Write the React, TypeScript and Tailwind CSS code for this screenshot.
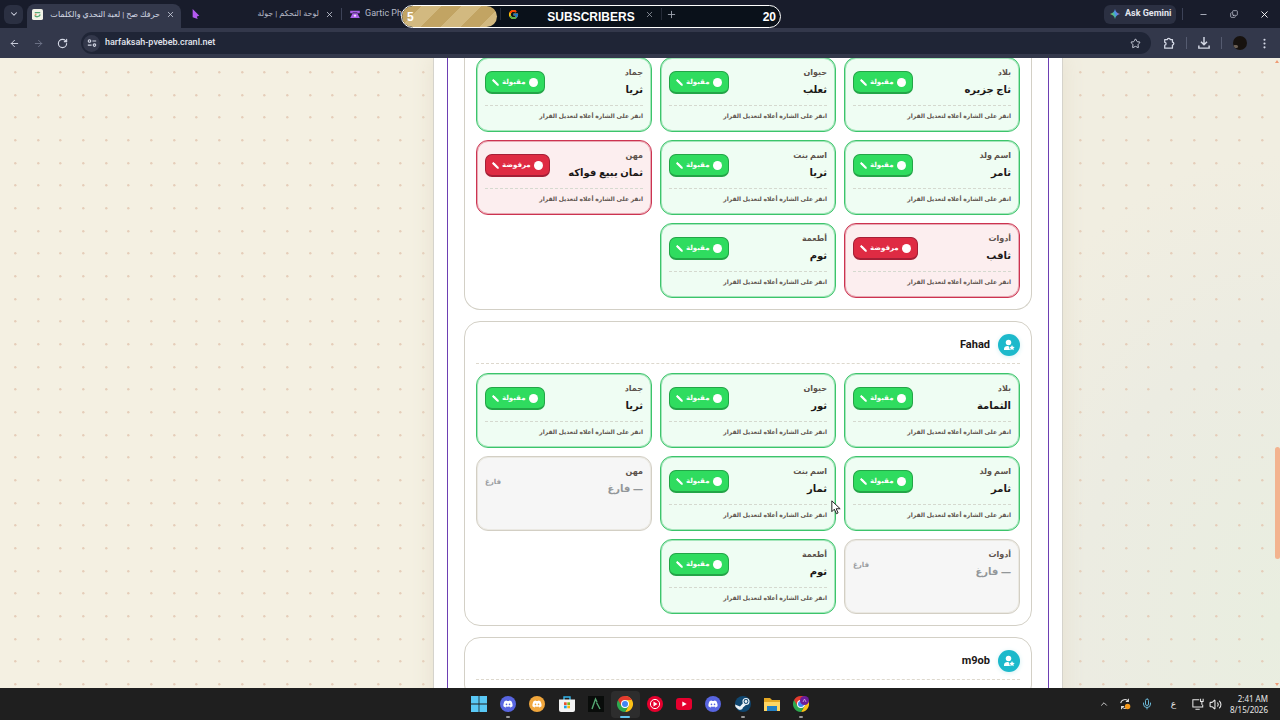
import type { ReactNode } from "react";
import {
  ArrowLeft,
  ArrowRight,
  ChevronDown,
  ChevronUp,
  Copy,
  EllipsisVertical,
  Mic,
  Minus,
  Pencil,
  Plus,
  RotateCw,
  Star,
  Volume2,
  X,
} from "lucide-react";
import { FaDiscord, FaSteam } from "react-icons/fa";
import { FcGoogle } from "react-icons/fc";

type Status = "accepted" | "rejected" | "empty";
type Answer = { category: string; text: string; status: Status };
type Player = { name: string; answers: Answer[]; headless?: boolean };

const players: Player[] = [
  {
    name: "",
    headless: true,
    answers: [
      { category: "بلاد", text: "ثاج جزيره", status: "accepted" },
      { category: "حيوان", text: "ثعلب", status: "accepted" },
      { category: "جماد", text: "ثريا", status: "accepted" },
      { category: "اسم ولد", text: "ثامر", status: "accepted" },
      { category: "اسم بنت", text: "ثريا", status: "accepted" },
      { category: "مهن", text: "ثمان يبيع فواكه", status: "rejected" },
      { category: "أدوات", text: "ثاقب", status: "rejected" },
      { category: "أطعمة", text: "ثوم", status: "accepted" },
    ],
  },
  {
    name: "Fahad",
    answers: [
      { category: "بلاد", text: "الثمامة", status: "accepted" },
      { category: "حيوان", text: "ثور", status: "accepted" },
      { category: "جماد", text: "ثريا", status: "accepted" },
      { category: "اسم ولد", text: "ثامر", status: "accepted" },
      { category: "اسم بنت", text: "ثمار", status: "accepted" },
      { category: "مهن", text: "— فارغ", status: "empty" },
      { category: "أدوات", text: "— فارغ", status: "empty" },
      { category: "أطعمة", text: "ثوم", status: "accepted" },
    ],
  },
  { name: "m9ob", answers: [] },
];

const cardStyles: Record<Status, string> = {
  accepted: "border-[#3cc46b] bg-[#effdf3] shadow-[inset_0_0_0_1px_#a5e6bb]",
  rejected: "border-[#cc3350] bg-[#fceeef] shadow-[inset_0_0_0_1px_#e9a9b4]",
  empty: "border-[#d3cfc4] bg-[#f6f6f6] shadow-[inset_0_0_0_1px_#ebe9e3]",
};

function AnswerCard({ answer }: { answer: Answer }) {
  const { category, text, status } = answer;
  const empty = status === "empty";
  return (
    <article className={`min-h-[75px] rounded-xl border p-2 ${cardStyles[status]}`}>
      <div className="flex items-center justify-between">
        <div>
          <h3 className="pb-[2px] text-[8px] leading-[11px] font-bold text-[#5c524c]">{category}</h3>
          <p className={`text-[10px] leading-5 font-bold ${empty ? "text-[#929699]" : "text-[#1b1716]"}`}>{text}</p>
        </div>
        {empty ? (
          <span className="text-[7px] leading-3 font-bold text-[#9a9da1]">فارغ</span>
        ) : (
          <button
            type="button"
            className={`flex h-[23px] items-center gap-[3px] rounded-[7px] border border-b-2 px-[6px] text-[7px] font-bold text-white ${
              status === "accepted" ? "border-[#23a547] bg-[#2fdc5f]" : "border-[#a51f36] bg-[#df2b43]"
            }`}
          >
            <span className="size-[9px] rounded-full bg-white" />
            {status === "accepted" ? "مقبولة" : "مرفوضة"}
            <Pencil className="size-[7px] -scale-x-100" fill="currentColor" strokeWidth={3} />
          </button>
        )}
      </div>
      {!empty && (
        <p className="mt-[6px] border-t border-dashed border-[#d5d9cf] pt-[3px] text-[6px] leading-[14px] font-bold text-[#5f554f]">
          انقر على الشارة أعلاه لتعديل القرار
        </p>
      )}
    </article>
  );
}

function PlayerAvatar() {
  return (
    <span className="flex size-[22px] items-center justify-center rounded-full bg-[#1cb9cb] shadow-[0_1px_5px_#d5f0f3]">
      <svg viewBox="0 0 24 24" className="size-3" fill="#fff" aria-hidden="true">
        <circle cx="11" cy="7" r="5.500" />
        <path d="M2 22v-2c0-4 3-6 7-6h2l3 8z" />
        <path d="m18 12 1.700 3.400 3.800.6-2.700 2.700.6 3.800-3.400-1.800-3.400 1.800.6-3.800-2.700-2.700 3.800-.6z" />
      </svg>
    </span>
  );
}

function PlayerPanel({ player }: { player: Player }) {
  return (
    <section
      className={`border-[#d3d0c6] bg-white px-[11px] pb-[11px] ${
        player.headless ? "rounded-b-2xl border border-t-0" : "rounded-2xl border pt-3"
      }`}
    >
      {!player.headless && (
        <header className="mb-[9px] flex items-center gap-2 border-b border-dashed border-[#ddd8cd] pb-[7px]">
          <PlayerAvatar />
          <h2 className="font-[Roboto,sans-serif] text-[11px] leading-5 font-bold text-[#1b1716]">{player.name}</h2>
        </header>
      )}
      <div className={`grid grid-cols-3 gap-2 ${player.headless ? "-mt-px" : ""}`}>
        {player.answers.map((a) => (
          <AnswerCard key={a.category} answer={a} />
        ))}
      </div>
    </section>
  );
}

function DotBackdrop() {
  const stops = [15, 38, 60];
  return (
    <svg className="absolute inset-0 size-full" aria-hidden="true">
      <defs>
        <pattern id="dots" width="68" height="68" patternUnits="userSpaceOnUse">
          {stops.map((x) => stops.map((y) => <circle key={`${x}-${y}`} cx={x + 0.3} cy={y - 0.7} r="1.200" fill="#e5cdb9" />))}
        </pattern>
        <radialGradient id="glow" cx="1" cy="0.9" r="0.75">
          <stop offset="0" stopColor="#e9eee0" />
          <stop offset="0.6" stopColor="#ecece2" />
          <stop offset="1" stopColor="#f1eee1" />
        </radialGradient>
      </defs>
      <rect x="65%" width="35%" height="100%" fill="url(#glow)" />
      <rect width="100%" height="100%" fill="url(#dots)" />
    </svg>
  );
}

function ChromeLogo({ badge = false }: { badge?: boolean }) {
  return (
    <svg viewBox="0 0 32 32" className="size-4" aria-hidden="true">
      <path d="M16 0a16 16 0 0 1 13.860 8A16 16 0 0 1 16 32l7-12z" fill="#fbc116" />
      <path d="M2.140 8A16 16 0 0 0 16 32l7-12-7-4z" fill="#2da94f" />
      <path d="M2.140 8A16 16 0 0 1 29.860 8H16l-7 12z" fill="#e33b2e" />
      <circle cx="16" cy="16" r="8" fill="#fff" />
      <circle cx="16" cy="16" r="6" fill="#4285f4" />
      {badge && <circle cx="23" cy="9" r="9" fill="#6a1b9a" />}
      {badge && <path d="m20 12 3-6 3 6" stroke="#d9b6ee" strokeWidth="1.500" fill="none" />}
    </svg>
  );
}

function Disc({ className, children }: { className: string; children: ReactNode }) {
  return <span className={`flex size-4 items-center justify-center ${className}`}>{children}</span>;
}

const apps: { label: string; icon: ReactNode; running?: boolean; active?: boolean }[] = [
  {
    label: "Start",
    icon: (
      <svg viewBox="0 0 16 16" className="size-4" fill="#59c8f5" aria-hidden="true">
        <path d="M0 0h7.600v7.600H0zM8.400 0H16v7.600H8.400zM0 8.400h7.600V16H0zM8.400 8.400H16V16H8.400z" />
      </svg>
    ),
  },
  { label: "Discord", running: true, icon: <Disc className="rounded-full bg-[#5865e0]"><FaDiscord size={10} color="#fff" /></Disc> },
  { label: "Discord Canary", icon: <Disc className="rounded-full bg-[#f0a63c]"><FaDiscord size={10} color="#fff" /></Disc> },
  {
    label: "Microsoft Store",
    icon: (
      <svg viewBox="0 0 16 16" className="size-4" aria-hidden="true">
        <path d="M5 4V1h6v3" fill="none" stroke="#35b5ea" strokeWidth="1.400" />
        <path d="M0 3.500h16V14a2 2 0 0 1-2 2H2a2 2 0 0 1-2-2z" fill="#f3f3f3" />
        <path d="M5 6.300h2.700V9H5z" fill="#e8502c" />
        <path d="M8.300 6.300H11V9H8.300z" fill="#7cb518" />
        <path d="M5 9.600h2.700v2.700H5z" fill="#1ba1e2" />
        <path d="M8.300 9.600H11v2.700H8.300z" fill="#f9b70d" />
      </svg>
    ),
  },
  {
    label: "Games",
    icon: (
      <svg viewBox="0 0 16 16" className="size-4" aria-hidden="true">
        <path d="M0 0h16v16H0z" fill="#090c0a" />
        <path d="m4 13 3.500-10 1.500 3M8.500 6.500 12 13" fill="none" stroke="#55a873" strokeWidth="1.400" />
      </svg>
    ),
  },
  { label: "Chrome", active: true, icon: <ChromeLogo /> },
  {
    label: "YouTube Music",
    icon: (
      <svg viewBox="0 0 16 16" className="size-4" aria-hidden="true">
        <circle cx="8" cy="8" r="8" fill="#e6002e" />
        <circle cx="8" cy="8" r="4.600" fill="none" stroke="#fff" />
        <path d="m6.500 5.500 4 2.500-4 2.500z" fill="#fff" />
      </svg>
    ),
  },
  {
    label: "YouTube",
    icon: (
      <svg viewBox="0 0 16 16" className="size-4" aria-hidden="true">
        <rect y="2" width="16" height="12" rx="3" fill="#e6002e" />
        <path d="m6.300 5.500 4.400 2.500-4.400 2.500z" fill="#fff" />
      </svg>
    ),
  },
  { label: "Discord PTB", icon: <Disc className="rounded-full bg-[#5865e0]"><FaDiscord size={10} color="#fff" /></Disc> },
  {
    label: "Steam",
    running: true,
    icon: (
      <svg viewBox="0 0 16 16" className="size-4" aria-hidden="true">
        <circle cx="8" cy="8" r="8" fill="#10466f" />
        <path d="M0 8.500 5 10.500 9 6l3 2-4 3.500a3 3 0 0 1-5 1.500L.6 11z" fill="#eef3f7" />
        <circle cx="11" cy="5.500" r="3" fill="#10466f" stroke="#eef3f7" strokeWidth="1.100" />
        <circle cx="11" cy="5.500" r="1.400" fill="#eef3f7" />
      </svg>
    ),
  },
  {
    label: "Files",
    icon: (
      <svg viewBox="0 0 18 16" className="h-4 w-[18px]" aria-hidden="true">
        <path d="M1 2h6l2 2h8v10H1z" fill="#e5a823" />
        <path d="M1 6h16v9H1z" fill="#ffd663" />
        <path d="M4 10h10v5H4z" fill="#2480c4" />
      </svg>
    ),
  },
  { label: "Chrome profile", running: true, icon: <ChromeLogo badge /> },
];

function BrowserChrome() {
  return (
    <header className="shrink-0 bg-[#181c2b] font-[Roboto,'Noto_Sans','DejaVu_Sans',sans-serif] text-[#d4d8e5]">
      <div className="flex h-7 items-center">
        <button type="button" aria-label="Search tabs" className="ml-1 flex h-[19px] w-[19px] items-center justify-center rounded-md bg-[#2b3042]">
          <ChevronDown size={10} strokeWidth={2.5} />
        </button>
        <div className="ml-1 flex h-6 w-[154px] items-center self-end rounded-t-lg bg-[#33384b] pr-1 pb-[3px] pl-[5px]">
          <svg viewBox="0 0 12 12" className="size-[11px]" aria-hidden="true">
            <rect width="12" height="12" rx="2" fill="#f2f3e7" />
            <path d="M3 4h6M3 7c1 2 5 2 6-1" stroke="#54a975" strokeWidth="1.500" fill="none" />
            <circle cx="4" cy="6" r="1" fill="#e79468" />
          </svg>
          <span dir="rtl" className="ml-auto text-[8px] leading-4 whitespace-nowrap">
            حرفك صح | لعبة التحدي والكلمات
          </span>
          <button type="button" aria-label="Close tab" className="mr-[2px] ml-[6px]"><X size={9} /></button>
        </div>
        <div className="flex w-40 items-center pl-[10px]">
          <svg viewBox="0 0 12 12" className="size-[10px]" aria-hidden="true">
            <path d="M2 0 10 8 7 9l1 3-6-2z" fill="#b45af0" />
          </svg>
          <span dir="rtl" className="ml-auto text-[8px] leading-4 whitespace-nowrap text-[#b6bac7]">لوحة التحكم | جولة</span>
          <button type="button" aria-label="Close tab" className="mr-[7px] ml-[6px]"><X size={9} /></button>
        </div>
        <span className="h-3 w-px bg-[#3c4257]" />
        <div className="flex w-[158px] items-center gap-[5px] pl-2 text-[9px] text-[#b6bac7]">
          <svg viewBox="0 0 12 10" className="h-2 w-[10px]" fill="#a95fe8" aria-hidden="true">
            <path d="M0 1h12v3H9V3H3v1H0zM3 4h6l3 6H0z" />
            <circle cx="6" cy="7" r="1.500" fill="#efe0fa" />
          </svg>
          Gartic Pho
        </div>
        <span className="z-10 h-3 w-px bg-[#252b38]" />
        <div className="flex w-[153px] items-center pl-[7px]">
          <FcGoogle size={11} className="z-10" />
          <span className="ml-10 text-[9px] text-[#7d8290]">Search</span>
          <button type="button" aria-label="Close tab" className="z-10 ml-auto text-[#9ea3ae]"><X size={9} /></button>
        </div>
        <span className="z-10 ml-[7px] h-3 w-px bg-[#252b38]" />
        <button type="button" aria-label="New tab" className="z-10 ml-1 text-[#9ea3ae]"><Plus size={11} /></button>
        <div className="ml-auto flex items-center pr-[10px]">
          <button type="button" className="flex h-[19px] w-[72px] items-center gap-[5px] rounded-md bg-[#2b3042] pl-[6px] text-[9px] font-bold whitespace-nowrap text-[#e2e5ee]">
            <svg viewBox="0 0 12 12" className="size-[10px]" aria-hidden="true">
              <defs>
                <linearGradient id="gem" x1="0" y1="0.7" x2="1" y2="0.3">
                  <stop offset="0" stopColor="#f4c63d" />
                  <stop offset="0.3" stopColor="#4fc47f" />
                  <stop offset="0.6" stopColor="#4b8ef5" />
                  <stop offset="1" stopColor="#dc5a78" />
                </linearGradient>
              </defs>
              <path d="M6 0c.8 3.500 2.500 5.200 6 6-3.500.8-5.200 2.500-6 6-.8-3.500-2.500-5.200-6-6 3.500-.8 5.200-2.500 6-6z" fill="url(#gem)" />
            </svg>
            Ask Gemini
          </button>
          <span className="ml-[6px] h-3 w-px bg-[#3c4257]" />
          <button type="button" aria-label="Minimize" className="ml-4"><Minus size={9} /></button>
          <button type="button" aria-label="Restore" className="ml-[22px]"><Copy size={8} className="-scale-x-100 rotate-180" /></button>
          <button type="button" aria-label="Close" className="ml-[21px] text-white"><X size={11} /></button>
        </div>
      </div>
      <div className="flex h-[30px] items-center bg-[#33384b] px-[9px]">
        <button type="button" aria-label="Back"><ArrowLeft size={11} /></button>
        <button type="button" aria-label="Forward" className="ml-[13px] text-[#70758a]"><ArrowRight size={11} /></button>
        <button type="button" aria-label="Reload" className="ml-[13px]"><RotateCw size={11} strokeWidth={2.5} /></button>
        <div className="ml-[13px] flex h-[22px] flex-1 items-center rounded-full bg-[#1f2536] pr-[10px] pl-[2px]">
          <button type="button" aria-label="Site information" className="flex size-[17px] items-center justify-center rounded-full bg-[#33384b]">
            <svg viewBox="0 0 12 12" className="size-[10px]" fill="none" stroke="currentColor" strokeWidth="1.300" aria-hidden="true">
              <circle cx="3" cy="3.500" r="1.500" />
              <path d="M6.500 3.500H11M1 8.500h4.500" />
              <circle cx="9" cy="8.500" r="1.500" />
            </svg>
          </button>
          <input
            aria-label="Address"
            defaultValue="harfaksah-pvebeb.cranl.net"
            className="ml-[5px] min-w-0 flex-1 bg-transparent text-[9px] font-medium text-[#e2e5ee] outline-none"
          />
          <button type="button" aria-label="Bookmark"><Star size={11} /></button>
        </div>
        <button type="button" aria-label="Extensions" className="ml-3">
          <svg viewBox="0 0 14 14" className="size-3" fill="none" stroke="currentColor" strokeWidth="1.500" strokeLinejoin="round" aria-hidden="true">
            <path d="M2 3h3a1.700 1.500 0 0 1 3.400 0H11v3a1.600 1.700 0 0 1 0 3.400V13H2V9.600a1.600 1.700 0 0 0 0-3.400z" />
          </svg>
        </button>
        <span className="ml-[11px] h-3 w-px bg-[#555b70]" />
        <button type="button" aria-label="Downloads" className="ml-[11px]">
          <svg viewBox="0 0 14 14" className="size-3" fill="none" stroke="currentColor" strokeWidth="1.700" aria-hidden="true">
            <path d="M7 0v9M3.500 5.500 7 9l3.500-3.500M1 10v3h12v-3" />
          </svg>
        </button>
        <span className="ml-[11px] h-3 w-px bg-[#555b70]" />
        <button type="button" aria-label="Profile" className="ml-[11px] size-[14px] overflow-hidden rounded-full bg-[#17120f]">
          <span className="mt-[6px] block h-[3px] w-[5px] rounded-full bg-[#6b5f54]" />
        </button>
        <button type="button" aria-label="Menu" className="ml-[11px]"><EllipsisVertical size={13} /></button>
      </div>
    </header>
  );
}

function SubscriberGoal() {
  return (
    <div className="absolute top-[5px] left-[401px] flex h-[23px] w-[380px] items-center justify-between overflow-hidden rounded-full border border-white bg-[#080f17]/85 px-1 font-['Liberation_Sans',sans-serif] text-[12px] font-bold text-white">
      <span className="absolute inset-y-0 left-0 w-[95px] rounded-full bg-[repeating-linear-gradient(135deg,#c2a463_0_14px,#d2b980_14px_28px)]" />
      <span className="relative w-8 pl-px">5</span>
      <span className="relative">SUBSCRIBERS</span>
      <span className="relative w-8 text-right">20</span>
    </div>
  );
}

function Taskbar() {
  return (
    <footer className="flex h-8 shrink-0 items-center bg-[#1f1f1f] text-[#e8e8e8]">
      <div className="flex-1 pl-3" />
      <nav className="grid w-[352px] grid-cols-12">
        {apps.map((app) => (
          <button
            key={app.label}
            type="button"
            aria-label={app.label}
            className={`relative flex h-[27px] items-center justify-center rounded-sm ${app.active ? "bg-[#2d2d2d]" : ""}`}
          >
            {app.icon}
            {app.active && <span className="absolute bottom-0 h-[2px] w-[10px] rounded-full bg-[#62c4ee]" />}
            {app.running && <span className="absolute bottom-0 h-[2px] w-1 rounded-full bg-[#9a9a9a]" />}
          </button>
        ))}
      </nav>
      <div className="flex flex-1 items-center justify-end pr-3">
        <ChevronUp size={10} />
        <svg viewBox="0 0 14 14" className="ml-[10px] size-3" aria-hidden="true">
          <path d="M2 6a5 5 0 0 1 9-2M11 1v3H8M12 8a5 5 0 0 1-9 2M3 13v-3h3" fill="none" stroke="#dedede" strokeWidth="1.200" />
          <circle cx="10" cy="10" r="3.200" fill="#f59a1d" />
        </svg>
        <Mic size={12} className="ml-[10px] text-[#6bb7d6]" />
        <span className="ml-4 w-[9px] text-center text-[9px]">ع</span>
        <svg viewBox="0 0 14 14" className="ml-[14px] size-3" fill="none" stroke="currentColor" strokeWidth="1.200" aria-hidden="true">
          <path d="M8.500 2H1v8.500h11.500V8M4 13h5M10 1v3h3V1M11.500 4v4" />
        </svg>
        <Volume2 size={13} className="ml-[5px]" />
        <div className="ml-2 text-right text-[8px] leading-[11px] whitespace-nowrap">
          <div>2:41 AM</div>
          <div>8/15/2026</div>
        </div>
      </div>
    </footer>
  );
}

export default function App() {
  return (
    <div className="relative flex h-screen flex-col overflow-hidden font-['Noto_Sans','DejaVu_Sans',sans-serif]">
      <BrowserChrome />
      <SubscriberGoal />
      <main className="relative min-h-0 flex-1 overflow-hidden bg-[#f4f0e2]">
        <DotBackdrop />
        <div className="relative pl-[216px]">
          <div dir="rtl" className="mx-auto w-full max-w-[630px] border-x border-[#d5d3cc] bg-white px-[13px] shadow-[0_0_20px_#e6dfce]">
            <div className="flex min-h-[640px] flex-col gap-[11px] border-x border-[#6d3fb3] px-4 pb-10">
              {players.map((p) => (
                <PlayerPanel key={p.name} player={p} />
              ))}
            </div>
          </div>
        </div>
        <div className="absolute top-[389px] right-0 h-[112px] w-[5px] rounded-full bg-[#f3b38f]" />
        <span className="absolute top-[2px] right-px border-x-[2px] border-b-[3px] border-x-transparent border-b-[#ef9c76]" />
        <span className="absolute right-px bottom-[2px] border-x-[2px] border-t-[3px] border-x-transparent border-t-[#ef9c76]" />
      </main>
      <Taskbar />
      <svg viewBox="0 0 12 18" className="pointer-events-none absolute top-[500px] left-[831px] h-[15px] w-[10px]" aria-hidden="true">
        <path d="M1 1v13l3-3 2.500 5.500 2-1L6.200 10.500H11z" fill="#fff" stroke="#222" strokeWidth="1.200" />
      </svg>
    </div>
  );
}
